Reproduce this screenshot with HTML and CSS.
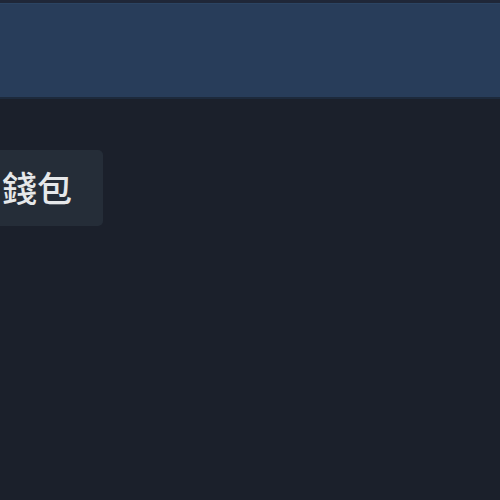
FILE: index.html
```html
<!DOCTYPE html>
<html>
<head>
  <meta charset="UTF-8">
  <title>錢包</title>
  <link rel="stylesheet" href="styles.css">
</head>
<body>
  <div class="topbar"></div>
  <div class="header"></div>
  <div class="content">
    <a class="wallet-btn" href="#">錢包</a>
  </div>
</body>
</html>
```

FILE: styles.css
```css
body {
  font-family: "Noto Sans CJK TC", "Noto Sans", sans-serif;
  margin: 0;
  padding: 0;
  background-color: #1b202b;
  color: #e6e8ea;
  overflow: hidden;
}
.topbar {
  height: 3px;
  background-color: #1f2738;
}
.header {
  background-color: #283d5a;
  border-top: 1px solid #2b4462;
  border-bottom: 2px solid #1d2a3c;
  box-sizing: border-box;
  height: 96px;
}
.content {
  padding-top: 51px;
}
.wallet-btn {
  display: inline-block;
  margin-left: -34px;
  padding: 0 31px 0 36px;
  height: 76px;
  line-height: 74px;
  background-color: #252d38;
  border-radius: 5px;
  color: #e6e8ea;
  text-decoration: none;
  font-size: 35px;
  font-weight: 500;
}
```
